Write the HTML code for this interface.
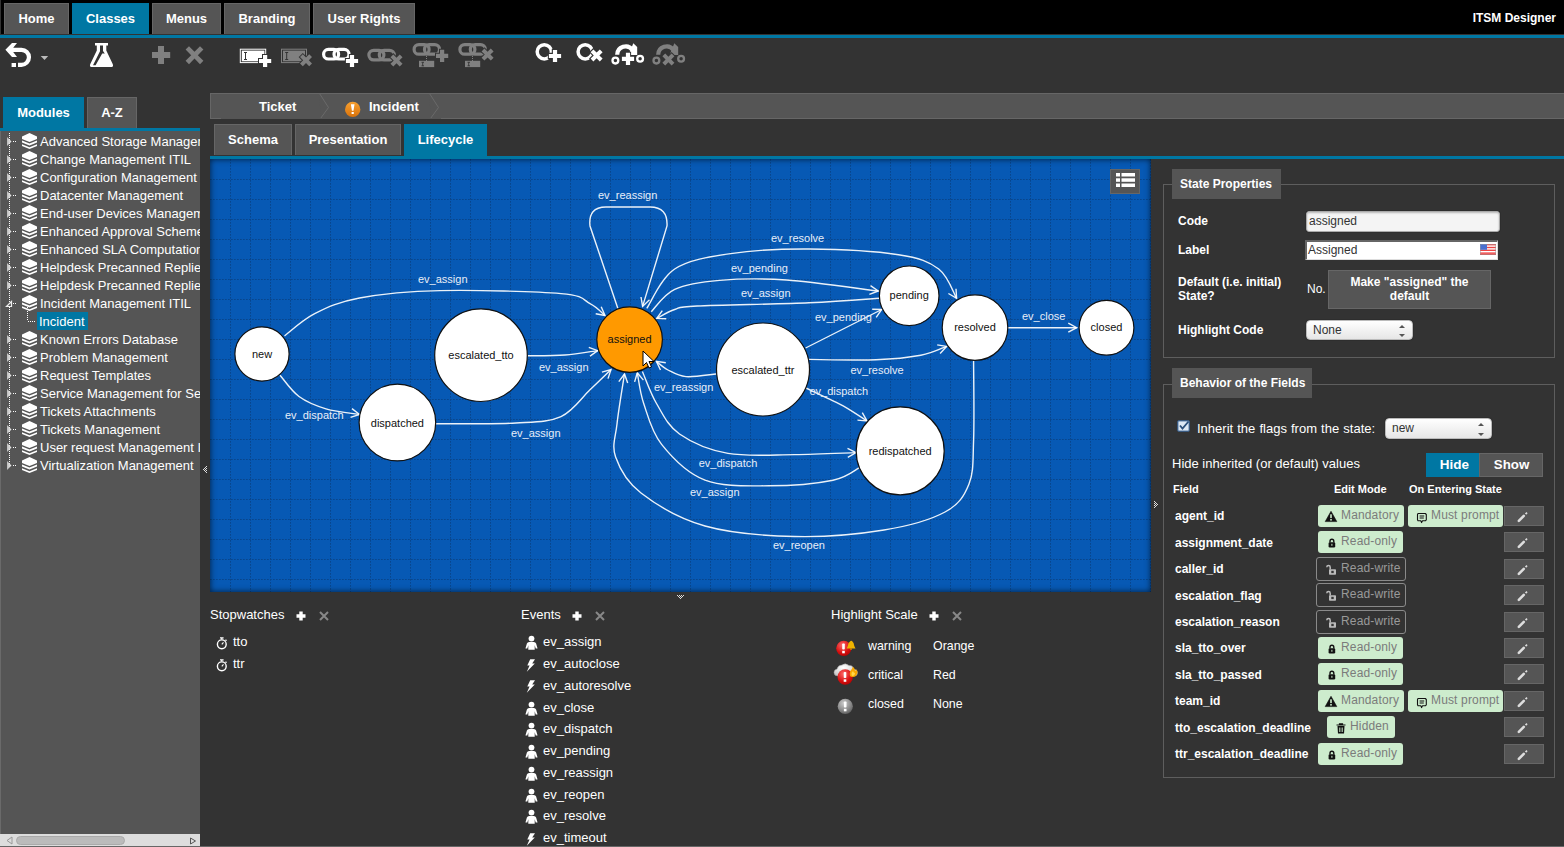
<!DOCTYPE html>
<html><head><meta charset="utf-8">
<style>
*{box-sizing:border-box;margin:0;padding:0}
html,body{width:1564px;height:847px;overflow:hidden;background:#333;font-family:"Liberation Sans",sans-serif;color:#fff}
.a{position:absolute}
.tab{position:absolute;background:#555;border:1px solid #666;border-bottom:none;font-weight:bold;font-size:13px;text-align:center;color:#fff;white-space:nowrap}
.tab.on{background:#0077a3;border-color:#0077a3}
.blue{position:absolute;background:#0077a3}
.tr{position:absolute;left:40px;height:18px;line-height:18px;font-size:13px;white-space:nowrap;color:#fff}
svg{position:absolute;overflow:visible}
.lab{font-weight:bold;font-size:12px;line-height:15px;white-space:nowrap}
.sel{border-radius:4px;background:linear-gradient(#fff,#e6e6e6);border:1px solid #bbb;box-shadow:0 0 1px #000;font-size:12px;color:#333;padding-left:6px;line-height:19px}
.sel:after{content:"";position:absolute;right:7px;top:4px;width:0;height:0;border:3px solid transparent;border-bottom:3px solid #555;border-top:none}
.sel:before{content:"";position:absolute;right:7px;bottom:2px;width:0;height:0;border:3px solid transparent;border-top:3px solid #555;border-bottom:none}
.bdg{font-size:12px;white-space:nowrap}
.bt{position:absolute;top:0;line-height:20px;letter-spacing:.15px}

</style></head>
<body>
<div class="a" style="left:1px;top:0;width:1563px;height:34px;background:#000"></div>
<div class="tab" style="left:4px;top:3px;width:65px;height:31px;line-height:30px">Home</div>
<div class="tab on" style="left:72px;top:3px;width:77px;height:31px;line-height:30px">Classes</div>
<div class="tab" style="left:152px;top:3px;width:69px;height:31px;line-height:30px">Menus</div>
<div class="tab" style="left:224px;top:3px;width:86px;height:31px;line-height:30px">Branding</div>
<div class="tab" style="left:313px;top:3px;width:102px;height:31px;line-height:30px">User Rights</div>
<div class="a" style="right:8px;top:11px;font-weight:bold;font-size:12px;color:#fff">ITSM Designer</div>
<div class="blue" style="left:0;top:35px;width:1564px;height:3px"></div>

<svg style="left:0;top:0" width="700" height="93" viewBox="0 0 700 93">
<defs>
<g id="plus"><path d="M-2.1 -6.1h4.2v4h4v4.2h-4v4h-4.2v-4h-4v-4.2h4z"/></g>
<g id="xx"><path d="M-6 -3.2L-3.2 -6L0 -2.8L3.2 -6L6 -3.2L2.8 0L6 3.2L3.2 6L0 2.8L-3.2 6L-6 3.2L-2.8 0z"/></g>
<g id="chain" fill="none" stroke-width="3.2"><rect x="1.6" y="1.6" width="15" height="9.6" rx="4.8"/><rect x="12" y="1.6" width="15" height="9.6" rx="4.8"/></g>
</defs>
<!-- undo -->
<path fill="#fff" d="M5.4 49.8L12 43H17L13.2 47.8H21.5A9.55 9.55 0 0 1 21.5 66.9H18V62.7H21.5A5.35 5.35 0 0 0 21.5 52H13.2L17 56.9H12Z M11.6 62.9h4.4v4h-4.4z"/>
<path fill="#bbb" d="M40.7 56H48.2L44.5 60Z"/>
<!-- flask -->
<path fill="#fff" fill-rule="evenodd" d="M95 43H108V45.6H106.3V50.5L112.8 64.2Q113.8 67 111 67H92Q89.2 67 90.2 64.2L96.8 50.5V45.6H95Z M100 45.6H103V51L104.8 53.6H102.2L95.6 65.3H93L100 51.2Z"/>
<!-- plus / x gray -->
<path fill="#808080" d="M158 46h6v6h6.2v6h-6.2v6h-6v-6h-6v-6h6z"/>
<path fill="#808080" d="M185.6 49.5L189 46.2L194.5 51.8L200 46.2L203.4 49.5L197.8 55.2L203.4 60.8L200 64.2L194.5 58.6L189 64.2L185.6 60.8L191.2 55.2Z"/>
<!-- field add -->
<rect x="240.3" y="49.2" width="25.4" height="13.4" fill="none" stroke="#fff"/>
<rect x="241.8" y="50.6" width="22.6" height="10.7" fill="#fff"/>
<path d="M244 52.5h3M245.5 52.5v7M244 59.5h3" stroke="#333" stroke-width="1"/>
<g fill="#fff" stroke="#333" stroke-width="2" paint-order="stroke" transform="translate(265.1 61)"><use href="#plus"/></g>
<!-- field del -->
<rect x="281.5" y="49.2" width="25" height="13.4" fill="none" stroke="#808080"/>
<rect x="283" y="50.6" width="22" height="10.7" fill="#808080"/>
<path d="M285.2 52.5h3M286.7 52.5v7M285.2 59.5h3" stroke="#333" stroke-width="1"/>
<g fill="#808080" stroke="#333" stroke-width="2" paint-order="stroke" transform="translate(306 60.3)"><use href="#xx"/></g>
<!-- link add -->
<g stroke="#fff" transform="translate(322 47.8)"><use href="#chain"/></g>
<g fill="#fff" stroke="#333" stroke-width="2" paint-order="stroke" transform="translate(352 61)"><use href="#plus"/></g>
<!-- link del -->
<g stroke="#808080" transform="translate(367.3 48.7)"><use href="#chain"/></g>
<g fill="#808080" stroke="#333" stroke-width="2" paint-order="stroke" transform="translate(396.5 60.5)"><use href="#xx"/></g>
<!-- link field add -->
<g stroke="#808080" transform="translate(412.5 43)"><use href="#chain"/></g>
<path d="M426.5 56v5" stroke="#808080" stroke-dasharray="1 1"/>
<rect x="419" y="60.8" width="15.2" height="6.3" fill="#808080"/>
<path d="M421.5 62.3h2.5M422.7 62.3v3.5M421.5 65.8h2.5" stroke="#333" stroke-width=".9"/>
<g fill="#808080" stroke="#333" stroke-width="2" paint-order="stroke" transform="translate(442.1 55.8)"><use href="#plus"/></g>
<!-- link field del -->
<g stroke="#808080" transform="translate(458.3 43)"><use href="#chain"/></g>
<path d="M472.5 56v5" stroke="#808080" stroke-dasharray="1 1"/>
<rect x="465" y="60.8" width="15.2" height="6.3" fill="#808080"/>
<path d="M467.5 62.3h2.5M468.7 62.3v3.5M467.5 65.8h2.5" stroke="#333" stroke-width=".9"/>
<g fill="#808080" stroke="#333" stroke-width="2" paint-order="stroke" transform="translate(487.6 54.6)"><use href="#xx"/></g>
<!-- state add -->
<circle cx="544.3" cy="51.8" r="7.1" fill="none" stroke="#fff" stroke-width="3.5"/>
<g fill="#fff" stroke="#333" stroke-width="2.2" paint-order="stroke" transform="translate(555 56)"><use href="#plus"/></g>
<!-- state del -->
<circle cx="585.2" cy="51.8" r="7.1" fill="none" stroke="#fff" stroke-width="3.5"/>
<g fill="#fff" stroke="#333" stroke-width="2.2" paint-order="stroke" transform="translate(596.6 55.4)"><use href="#xx"/></g>
<!-- transition add -->
<g>
<path d="M617.2 54.8A8.4 8.4 0 0 1 632.5 50" fill="none" stroke="#fff" stroke-width="4.2"/>
<path fill="#fff" d="M633.3 43.3L637.2 46.9V54.9H628.6Z"/>
<circle cx="615.4" cy="60.6" r="2.9" fill="none" stroke="#fff" stroke-width="2.3"/>
<circle cx="640.1" cy="58.7" r="2.9" fill="none" stroke="#fff" stroke-width="2.3"/>
</g>
<g fill="#fff" stroke="#333" stroke-width="2" paint-order="stroke" transform="translate(628 58.9)"><use href="#plus"/></g>
<!-- transition del -->
<g transform="translate(41 0)">
<path d="M617.2 54.8A8.4 8.4 0 0 1 632.5 50" fill="none" stroke="#808080" stroke-width="4.2"/>
<path fill="#808080" d="M633.3 43.3L637.2 46.9V54.9H628.6Z"/>
<circle cx="615.4" cy="60.6" r="2.9" fill="none" stroke="#808080" stroke-width="2.3"/>
<circle cx="640.1" cy="58.7" r="2.9" fill="none" stroke="#808080" stroke-width="2.3"/>
</g>
<g fill="#808080" stroke="#333" stroke-width="2" paint-order="stroke" transform="translate(668.4 59.5)"><use href="#xx"/></g>
</svg>

<div class="tab on" style="left:3px;top:97px;width:81px;height:31px;line-height:30px">Modules</div>
<div class="tab" style="left:87px;top:97px;width:50px;height:31px;line-height:30px">A-Z</div>
<div class="blue" style="left:0;top:128px;width:200px;height:3px"></div>
<div class="a" style="left:0;top:131px;width:200px;height:716px;background:#555;overflow:hidden"><div class="a" style="left:0;top:0;width:1px;height:716px;background:#6a6a6a"></div>
<svg style="left:0;top:0" width="200" height="716"><defs><linearGradient id="tg" x1="0" x2="1"><stop offset="0" stop-color="#bbb"/><stop offset="1" stop-color="#eee"/></linearGradient><g id="stk"><path d="M7.5 0L15 3.4V5.9L7.5 8.9L0 5.9V3.4Z M0 7.5L7.5 10.5L15 7.5V9.6L7.5 12.6L0 9.6Z M0 11.2L7.5 14.2L15 11.2V13L7.5 16L0 13Z" fill="#fff"/></g></defs><line x1="9.5" y1="2" x2="9.5" y2="334" stroke="#fff" stroke-width="1" stroke-dasharray="1 1"/><path d="M7 6L11.5 10.5L7 15Z" fill="url(#tg)"/><line x1="13" y1="10.5" x2="17" y2="10.5" stroke="#fff" stroke-dasharray="1 1"/><use href="#stk" x="22" y="2"/><path d="M7 24L11.5 28.5L7 33Z" fill="url(#tg)"/><line x1="13" y1="28.5" x2="17" y2="28.5" stroke="#fff" stroke-dasharray="1 1"/><use href="#stk" x="22" y="20"/><path d="M7 42L11.5 46.5L7 51Z" fill="url(#tg)"/><line x1="13" y1="46.5" x2="17" y2="46.5" stroke="#fff" stroke-dasharray="1 1"/><use href="#stk" x="22" y="38"/><path d="M7 60L11.5 64.5L7 69Z" fill="url(#tg)"/><line x1="13" y1="64.5" x2="17" y2="64.5" stroke="#fff" stroke-dasharray="1 1"/><use href="#stk" x="22" y="56"/><path d="M7 78L11.5 82.5L7 87Z" fill="url(#tg)"/><line x1="13" y1="82.5" x2="17" y2="82.5" stroke="#fff" stroke-dasharray="1 1"/><use href="#stk" x="22" y="74"/><path d="M7 96L11.5 100.5L7 105Z" fill="url(#tg)"/><line x1="13" y1="100.5" x2="17" y2="100.5" stroke="#fff" stroke-dasharray="1 1"/><use href="#stk" x="22" y="92"/><path d="M7 114L11.5 118.5L7 123Z" fill="url(#tg)"/><line x1="13" y1="118.5" x2="17" y2="118.5" stroke="#fff" stroke-dasharray="1 1"/><use href="#stk" x="22" y="110"/><path d="M7 132L11.5 136.5L7 141Z" fill="url(#tg)"/><line x1="13" y1="136.5" x2="17" y2="136.5" stroke="#fff" stroke-dasharray="1 1"/><use href="#stk" x="22" y="128"/><path d="M7 150L11.5 154.5L7 159Z" fill="url(#tg)"/><line x1="13" y1="154.5" x2="17" y2="154.5" stroke="#fff" stroke-dasharray="1 1"/><use href="#stk" x="22" y="146"/><path d="M6.5 175.5L11.5 175.5L11.5 170.5Z" fill="#555" stroke="#eee" stroke-width="1.2"/><line x1="13" y1="172.5" x2="17" y2="172.5" stroke="#fff" stroke-dasharray="1 1"/><use href="#stk" x="22" y="164"/><line x1="27.5" y1="176" x2="27.5" y2="190" stroke="#fff" stroke-dasharray="1 1"/><line x1="28" y1="190.5" x2="35" y2="190.5" stroke="#fff" stroke-dasharray="1 1"/><path d="M7 204L11.5 208.5L7 213Z" fill="url(#tg)"/><line x1="13" y1="208.5" x2="17" y2="208.5" stroke="#fff" stroke-dasharray="1 1"/><use href="#stk" x="22" y="200"/><path d="M7 222L11.5 226.5L7 231Z" fill="url(#tg)"/><line x1="13" y1="226.5" x2="17" y2="226.5" stroke="#fff" stroke-dasharray="1 1"/><use href="#stk" x="22" y="218"/><path d="M7 240L11.5 244.5L7 249Z" fill="url(#tg)"/><line x1="13" y1="244.5" x2="17" y2="244.5" stroke="#fff" stroke-dasharray="1 1"/><use href="#stk" x="22" y="236"/><path d="M7 258L11.5 262.5L7 267Z" fill="url(#tg)"/><line x1="13" y1="262.5" x2="17" y2="262.5" stroke="#fff" stroke-dasharray="1 1"/><use href="#stk" x="22" y="254"/><path d="M7 276L11.5 280.5L7 285Z" fill="url(#tg)"/><line x1="13" y1="280.5" x2="17" y2="280.5" stroke="#fff" stroke-dasharray="1 1"/><use href="#stk" x="22" y="272"/><path d="M7 294L11.5 298.5L7 303Z" fill="url(#tg)"/><line x1="13" y1="298.5" x2="17" y2="298.5" stroke="#fff" stroke-dasharray="1 1"/><use href="#stk" x="22" y="290"/><path d="M7 312L11.5 316.5L7 321Z" fill="url(#tg)"/><line x1="13" y1="316.5" x2="17" y2="316.5" stroke="#fff" stroke-dasharray="1 1"/><use href="#stk" x="22" y="308"/><path d="M7 330L11.5 334.5L7 339Z" fill="url(#tg)"/><line x1="13" y1="334.5" x2="17" y2="334.5" stroke="#fff" stroke-dasharray="1 1"/><use href="#stk" x="22" y="326"/></svg>
<div class="tr" style="top:2px">Advanced Storage Management</div>
<div class="tr" style="top:20px">Change Management ITIL</div>
<div class="tr" style="top:38px">Configuration Management</div>
<div class="tr" style="top:56px">Datacenter Management</div>
<div class="tr" style="top:74px">End-user Devices Management</div>
<div class="tr" style="top:92px">Enhanced Approval Schemes</div>
<div class="tr" style="top:110px">Enhanced SLA Computation</div>
<div class="tr" style="top:128px">Helpdesk Precanned Replies</div>
<div class="tr" style="top:146px">Helpdesk Precanned Replies</div>
<div class="tr" style="top:164px">Incident Management ITIL</div>
<div class="tr" style="left:37px;top:181px;height:18px;padding:0 3px 0 2px;background:#0077a3;line-height:20px">Incident</div>
<div class="tr" style="top:200px">Known Errors Database</div>
<div class="tr" style="top:218px">Problem Management</div>
<div class="tr" style="top:236px">Request Templates</div>
<div class="tr" style="top:254px">Service Management for Service Providers</div>
<div class="tr" style="top:272px">Tickets Attachments</div>
<div class="tr" style="top:290px">Tickets Management</div>
<div class="tr" style="top:308px">User request Management ITIL</div>
<div class="tr" style="top:326px">Virtualization Management</div>
<div class="a" style="left:0;top:703px;width:200px;height:12px;background:#ddd"></div>
<div class="a" style="left:16px;top:705px;width:109px;height:9px;background:#bbb;border-radius:5px;border:1px solid #aaa"></div>
<svg style="left:0;top:703px" width="200" height="12"><path d="M12 3L7 6.5L12 10Z" fill="none" stroke="#999"/><path d="M190.5 4L195.5 7L190.5 10Z" fill="none" stroke="#555"/></svg>
</div>
<!-- breadcrumb -->
<div class="a" style="left:210px;top:93px;width:1354px;height:26px;background:#555;border-top:1px solid #666;border-bottom:1px solid #666"></div>
<svg style="left:210px;top:93px" width="1354" height="26" viewBox="210 93 1354 26">
<path d="M210.5 119V93.5" stroke="#666"/>
<path d="M319.5 93.5L328.5 107.5L320.5 118.5" fill="#555" stroke="#6a6a6a" stroke-width="1"/>
<path d="M429.5 93.5L438.5 107.5L430.5 118.5" fill="#555" stroke="#6a6a6a" stroke-width="1"/>
<path d="M221 118.5H441" stroke="#555" stroke-width="1"/>
<defs><linearGradient id="og" x1="0" y1="0" x2="0" y2="1"><stop offset="0" stop-color="#f7a030"/><stop offset="1" stop-color="#d9720a"/></linearGradient></defs><circle cx="352.7" cy="109.4" r="7.7" fill="url(#og)"/><path d="M350.9 104.3h3.6l-1 6.4h-1.6z M351.6 112h2.2v2.1h-2.2z" fill="#fff"/>
</svg>
<div class="a" style="left:259px;top:99px;font-weight:bold;font-size:13px;line-height:15px">Ticket</div>
<div class="a" style="left:369px;top:99px;font-weight:bold;font-size:13px;line-height:15px">Incident</div>
<!-- sub tabs -->
<div class="tab" style="left:214px;top:124px;width:78px;height:31px;line-height:30px">Schema</div>
<div class="tab" style="left:295px;top:124px;width:106px;height:31px;line-height:30px">Presentation</div>
<div class="tab on" style="left:404px;top:124px;width:83px;height:32px;line-height:30px">Lifecycle</div>
<div class="blue" style="left:210px;top:156px;width:1354px;height:3px"></div>
<!-- splitter arrows -->
<svg style="left:0;top:0" width="1564" height="847" viewBox="0 0 1564 847"><g fill="#ddd"><rect x="206" y="466" width="1" height="1"/><rect x="206" y="468" width="1" height="1"/><rect x="206" y="470" width="1" height="1"/><rect x="206" y="472" width="1" height="1"/><rect x="205" y="467" width="1" height="1"/><rect x="205" y="469" width="1" height="1"/><rect x="205" y="471" width="1" height="1"/><rect x="204" y="468" width="1" height="1"/><rect x="204" y="470" width="1" height="1"/><rect x="203" y="469" width="1" height="1"/><rect x="1154" y="501" width="1" height="1"/><rect x="1154" y="503" width="1" height="1"/><rect x="1154" y="505" width="1" height="1"/><rect x="1154" y="507" width="1" height="1"/><rect x="1155" y="502" width="1" height="1"/><rect x="1155" y="504" width="1" height="1"/><rect x="1155" y="506" width="1" height="1"/><rect x="1156" y="503" width="1" height="1"/><rect x="1156" y="505" width="1" height="1"/><rect x="1157" y="504" width="1" height="1"/><rect x="677" y="595" width="1" height="1"/><rect x="679" y="595" width="1" height="1"/><rect x="681" y="595" width="1" height="1"/><rect x="683" y="595" width="1" height="1"/><rect x="678" y="596" width="1" height="1"/><rect x="680" y="596" width="1" height="1"/><rect x="682" y="596" width="1" height="1"/><rect x="679" y="597" width="1" height="1"/><rect x="681" y="597" width="1" height="1"/><rect x="680" y="598" width="1" height="1"/></g></svg>

<div class="a" style="left:210px;top:159px;width:941px;height:433px;background:#0759b4;overflow:hidden">
<svg style="left:0;top:0" width="941" height="433" viewBox="210 159 941 433" font-family="Liberation Sans" font-size="11">
<g stroke="#0a3468" stroke-width="1" stroke-dasharray="1.7 1.3" opacity="0.5">
<line x1="230.5" y1="159" x2="230.5" y2="592"/>
<line x1="250.5" y1="159" x2="250.5" y2="592"/>
<line x1="270.5" y1="159" x2="270.5" y2="592"/>
<line x1="290.5" y1="159" x2="290.5" y2="592"/>
<line x1="310.5" y1="159" x2="310.5" y2="592"/>
<line x1="330.5" y1="159" x2="330.5" y2="592"/>
<line x1="350.5" y1="159" x2="350.5" y2="592"/>
<line x1="370.5" y1="159" x2="370.5" y2="592"/>
<line x1="390.5" y1="159" x2="390.5" y2="592"/>
<line x1="410.5" y1="159" x2="410.5" y2="592"/>
<line x1="430.5" y1="159" x2="430.5" y2="592"/>
<line x1="450.5" y1="159" x2="450.5" y2="592"/>
<line x1="470.5" y1="159" x2="470.5" y2="592"/>
<line x1="490.5" y1="159" x2="490.5" y2="592"/>
<line x1="510.5" y1="159" x2="510.5" y2="592"/>
<line x1="530.5" y1="159" x2="530.5" y2="592"/>
<line x1="550.5" y1="159" x2="550.5" y2="592"/>
<line x1="570.5" y1="159" x2="570.5" y2="592"/>
<line x1="590.5" y1="159" x2="590.5" y2="592"/>
<line x1="610.5" y1="159" x2="610.5" y2="592"/>
<line x1="630.5" y1="159" x2="630.5" y2="592"/>
<line x1="650.5" y1="159" x2="650.5" y2="592"/>
<line x1="670.5" y1="159" x2="670.5" y2="592"/>
<line x1="690.5" y1="159" x2="690.5" y2="592"/>
<line x1="710.5" y1="159" x2="710.5" y2="592"/>
<line x1="730.5" y1="159" x2="730.5" y2="592"/>
<line x1="750.5" y1="159" x2="750.5" y2="592"/>
<line x1="770.5" y1="159" x2="770.5" y2="592"/>
<line x1="790.5" y1="159" x2="790.5" y2="592"/>
<line x1="810.5" y1="159" x2="810.5" y2="592"/>
<line x1="830.5" y1="159" x2="830.5" y2="592"/>
<line x1="850.5" y1="159" x2="850.5" y2="592"/>
<line x1="870.5" y1="159" x2="870.5" y2="592"/>
<line x1="890.5" y1="159" x2="890.5" y2="592"/>
<line x1="910.5" y1="159" x2="910.5" y2="592"/>
<line x1="930.5" y1="159" x2="930.5" y2="592"/>
<line x1="950.5" y1="159" x2="950.5" y2="592"/>
<line x1="970.5" y1="159" x2="970.5" y2="592"/>
<line x1="990.5" y1="159" x2="990.5" y2="592"/>
<line x1="1010.5" y1="159" x2="1010.5" y2="592"/>
<line x1="1030.5" y1="159" x2="1030.5" y2="592"/>
<line x1="1050.5" y1="159" x2="1050.5" y2="592"/>
<line x1="1070.5" y1="159" x2="1070.5" y2="592"/>
<line x1="1090.5" y1="159" x2="1090.5" y2="592"/>
<line x1="1110.5" y1="159" x2="1110.5" y2="592"/>
<line x1="1130.5" y1="159" x2="1130.5" y2="592"/>
<line x1="1150.5" y1="159" x2="1150.5" y2="592"/>
<line x1="210" y1="179.5" x2="1151" y2="179.5"/>
<line x1="210" y1="199.5" x2="1151" y2="199.5"/>
<line x1="210" y1="219.5" x2="1151" y2="219.5"/>
<line x1="210" y1="239.5" x2="1151" y2="239.5"/>
<line x1="210" y1="259.5" x2="1151" y2="259.5"/>
<line x1="210" y1="279.5" x2="1151" y2="279.5"/>
<line x1="210" y1="299.5" x2="1151" y2="299.5"/>
<line x1="210" y1="319.5" x2="1151" y2="319.5"/>
<line x1="210" y1="339.5" x2="1151" y2="339.5"/>
<line x1="210" y1="359.5" x2="1151" y2="359.5"/>
<line x1="210" y1="379.5" x2="1151" y2="379.5"/>
<line x1="210" y1="399.5" x2="1151" y2="399.5"/>
<line x1="210" y1="419.5" x2="1151" y2="419.5"/>
<line x1="210" y1="439.5" x2="1151" y2="439.5"/>
<line x1="210" y1="459.5" x2="1151" y2="459.5"/>
<line x1="210" y1="479.5" x2="1151" y2="479.5"/>
<line x1="210" y1="499.5" x2="1151" y2="499.5"/>
<line x1="210" y1="519.5" x2="1151" y2="519.5"/>
<line x1="210" y1="539.5" x2="1151" y2="539.5"/>
<line x1="210" y1="559.5" x2="1151" y2="559.5"/>
<line x1="210" y1="579.5" x2="1151" y2="579.5"/>
</g>
<g fill="none" stroke="#fff" stroke-width="1.4" stroke-opacity="0.92">
<path d="M284.5 336C289.5 332.3 302.2 320.0 314.7 313.7C327.2 307.4 338.6 301.9 359.5 298C380.4 294.1 406.4 291.3 440 290.6C473.6 289.9 536.0 291.4 561 293.6C586.0 295.8 582.7 300.0 590 303.6C597.3 307.2 602.5 313.5 605 315.5"/>
<path d="M595.7 313.8L605.0 315.5L601.2 306.8"/>
<path d="M280 375.2C283.2 378.8 291.3 390.9 299 396.5C306.7 402.1 315.9 405.8 326 408.8C336.1 411.8 353.9 413.5 359.5 414.4"/>
<path d="M350.5 417.4L359.5 414.4L352.0 408.6"/>
<path d="M435.5 423.8C448.9 423.7 495.1 424.2 516 423C536.9 421.8 548.7 422.1 561 416.6C573.3 411.1 581.7 397.6 590 389.8C598.3 382.0 607.5 373.0 611 369.6"/>
<path d="M608.0 378.6L611.0 369.6L601.9 372.2"/>
<path d="M527.7 355.7C533.9 355.6 553.3 355.9 565 355C576.7 354.1 592.2 351.3 597.7 350.6"/>
<path d="M590.0 356.1L597.7 350.6L588.8 347.3"/>
<path d="M617.8 308.2 L590 226 Q588 207 606 207 L650 207 Q668 207 667 226 L642.6 306.4"/>
<path d="M641.0 297.0L642.6 306.4L649.5 299.8"/>
<path d="M646.8 308.4C651.4 301.8 660.7 278.1 674.7 269C688.7 259.9 708.3 256.9 730.7 253.6C753.1 250.3 781.0 248.8 809 249C837.0 249.2 876.9 251.4 898.5 254.7C920.1 258.0 929.0 261.7 938.7 269C948.4 276.3 953.6 293.4 956.6 298.3"/>
<path d="M948.4 293.5L956.6 298.3L956.0 288.8"/>
<path d="M651.3 311.7C655.2 308.0 663.3 294.6 674.7 289.4C686.1 284.2 700.9 282.0 719.5 280.4C738.1 278.8 760.1 278.2 786.6 280C813.1 281.8 863.0 289.2 878.3 291"/>
<path d="M869.4 294.4L878.3 291.0L870.5 285.6"/>
<path d="M879.4 298.3C867.7 299.1 839.4 301.5 809 302.8C778.6 304.1 719.4 304.9 697 306C674.6 307.1 681.4 307.4 674.7 309.5C668.0 311.6 659.8 316.9 656.8 318.4"/>
<path d="M662.3 310.7L656.8 318.4L666.3 318.7"/>
<path d="M805.6 348C818.3 341.6 869.0 315.9 881.7 309.5"/>
<path d="M876.2 317.3L881.7 309.5L872.2 309.3"/>
<path d="M808.5 359.4C819.8 359.5 857.3 360.5 876 359.8C894.7 359.1 909.0 357.5 920.8 355.3C932.6 353.1 942.3 347.9 946.6 346.4"/>
<path d="M940.1 353.4L946.6 346.4L937.2 344.9"/>
<path d="M716 374C711.0 374.4 694.0 377.3 686 376.6C678.0 375.9 672.9 372.5 668 370C663.1 367.5 658.3 362.8 656.4 361.4"/>
<path d="M665.8 362.8L656.4 361.4L660.5 370.0"/>
<path d="M806 388C809.6 389.7 821.2 395.2 827.8 398.4C834.4 401.6 839.2 403.6 845.7 407.3C852.2 411.1 863.5 418.6 867 420.9"/>
<path d="M857.5 420.1L867.0 420.9L862.3 412.6"/>
<path d="M642.4 371.5C644.8 376.8 650.3 393.1 656.5 403.5C662.7 413.9 667.6 425.7 679.5 434C691.4 442.3 708.8 450.0 728 453.4C747.2 456.8 773.3 454.7 794.6 454.6C815.9 454.5 845.8 452.9 856 452.6"/>
<path d="M847.8 457.3L856.0 452.6L847.5 448.4"/>
<path d="M859.8 467.4C855.3 469.5 848.1 477.1 833 480.2C817.9 483.3 790.3 485.8 769 485.8C747.7 485.8 722.9 487.1 705 480.2C687.1 473.3 671.8 457.2 661.6 444.4C651.4 431.6 647.8 415.4 643.7 403.5C639.7 391.6 638.4 377.9 637.3 372.8"/>
<path d="M643.4 380.1L637.3 372.8L634.6 381.9"/>
<path d="M973.6 361C973.6 374.2 974.4 419.5 973.6 440C972.8 460.5 973.8 472.0 969 484C964.2 496.0 959.2 504.3 945 512C930.8 519.7 909.1 525.9 884 530C858.9 534.1 824.4 537.2 794.6 536.5C764.8 535.8 730.6 533.2 705 526C679.4 518.8 655.9 504.5 641 493C626.1 481.5 619.6 468.5 615.6 457C611.6 445.5 615.5 437.8 617 424C618.5 410.2 623.2 382.3 624.5 374"/>
<path d="M627.7 383.0L624.5 374.0L618.8 381.6"/>
<path d="M1008 327.7C1019.5 327.7 1065.2 327.7 1076.7 327.7"/>
<path d="M1068.3 332.2L1076.7 327.7L1068.3 323.2"/>
</g>
<g fill="#e8eef8">
<text x="418" y="283">ev_assign</text>
<text x="285" y="418.8">ev_dispatch</text>
<text x="511" y="436.7">ev_assign</text>
<text x="539" y="370.7">ev_assign</text>
<text x="598" y="199">ev_reassign</text>
<text x="771" y="241.7">ev_resolve</text>
<text x="731" y="272">ev_pending</text>
<text x="741" y="296.7">ev_assign</text>
<text x="815" y="321">ev_pending</text>
<text x="850.4" y="374">ev_resolve</text>
<text x="654" y="390.7">ev_reassign</text>
<text x="809.4" y="394.5">ev_dispatch</text>
<text x="698.7" y="467.4">ev_dispatch</text>
<text x="690" y="495.5">ev_assign</text>
<text x="772.9" y="549">ev_reopen</text>
<text x="1022" y="319.8">ev_close</text>
</g>
<circle cx="262" cy="354" r="27.1" fill="#fff" stroke="#111" stroke-width="1.2"/>
<text x="262" y="358" text-anchor="middle" fill="#111">new</text>
<circle cx="481" cy="355.2" r="46.3" fill="#fff" stroke="#111" stroke-width="1.2"/>
<text x="481" y="359.2" text-anchor="middle" fill="#111">escalated_tto</text>
<circle cx="397.4" cy="422.5" r="38.3" fill="#fff" stroke="#111" stroke-width="1.2"/>
<text x="397.4" y="426.5" text-anchor="middle" fill="#111">dispatched</text>
<circle cx="629.6" cy="339.6" r="32.8" fill="#f90" stroke="#111" stroke-width="1.2"/>
<text x="629.6" y="342.6" text-anchor="middle" fill="#111">assigned</text>
<circle cx="763" cy="369.5" r="46.5" fill="#fff" stroke="#111" stroke-width="1.2"/>
<text x="763" y="373.5" text-anchor="middle" fill="#111">escalated_ttr</text>
<circle cx="909.2" cy="295.8" r="29.8" fill="#fff" stroke="#111" stroke-width="1.2"/>
<text x="909.2" y="298.8" text-anchor="middle" fill="#111">pending</text>
<circle cx="975" cy="327.6" r="32.8" fill="#fff" stroke="#111" stroke-width="1.2"/>
<text x="975" y="330.6" text-anchor="middle" fill="#111">resolved</text>
<circle cx="1106.5" cy="327.8" r="27.400000000000002" fill="#fff" stroke="#111" stroke-width="1.2"/>
<text x="1106.5" y="330.8" text-anchor="middle" fill="#111">closed</text>
<circle cx="900.2" cy="450.9" r="44.0" fill="#fff" stroke="#111" stroke-width="1.2"/>
<text x="900.2" y="454.9" text-anchor="middle" fill="#111">redispatched</text>
<path d="M643 351 L643 366 L646.5 362.5 L649 368 L651.5 367 L649 361.5 L654 361.5 Z" fill="#fff" stroke="#000" stroke-width="1"/>
<rect x="1110.5" y="169.5" width="29" height="24" fill="#555" stroke="#666"/>
<g fill="#fff"><rect x="1116" y="173" width="4" height="3.5"/><rect x="1121.5" y="173" width="13.5" height="3.5"/><rect x="1116" y="178.3" width="4" height="3.5"/><rect x="1121.5" y="178.3" width="13.5" height="3.5"/><rect x="1116" y="183.5" width="4" height="3.5"/><rect x="1121.5" y="183.5" width="13.5" height="3.5"/></g>
</svg>
<div class="a" style="left:0;top:0;width:941px;height:433px;box-shadow:inset 0 0 6px rgba(0,0,0,.7)"></div>
</div>
<div class="a" style="left:1163px;top:184px;width:392px;height:174px;border:1px solid #5e5e5e"></div>
<div class="a" style="left:1172px;top:169px;width:109px;height:30px;background:#555;font-weight:bold;font-size:12px;line-height:30px;padding-left:8px">State Properties</div>
<div class="a lab" style="left:1178px;top:214px">Code</div>
<div class="a" style="left:1306px;top:211px;width:194px;height:21px;background:#f4f4f4;border:1px solid #aaa;border-radius:3px;box-shadow:inset 0 1px 2px rgba(0,0,0,.25), 0 0 1px #000;font-size:12px;color:#333;line-height:19px;padding-left:2px">assigned</div>
<div class="a lab" style="left:1178px;top:243px">Label</div>
<div class="a" style="left:1305px;top:240px;width:193px;height:20px;background:#fff;border-top:2px solid #666;border-left:2px solid #666;border-right:1px solid #ddd;border-bottom:1px solid #ddd;font-size:12px;color:#333;line-height:17px;padding-left:1px">Assigned</div>
<svg style="left:1480px;top:244px" width="16" height="11" viewBox="0 0 16 11"><rect x="0" y="0" width="16" height="11" fill="#fff"/><g fill="#e44"><rect y="0" width="16" height="1.4"/><rect y="2.8" width="16" height="1.4"/><rect y="5.6" width="16" height="1.4"/><rect y="8.4" width="16" height="1.4"/><rect y="9.8" width="16" height="1.2"/></g><rect x="0" y="0" width="7" height="5.8" fill="#4a6fd0"/><rect x="0.5" y="0.5" width="15" height="10" fill="none" stroke="#999" stroke-width="1" opacity=".5"/></svg>
<div class="a lab" style="left:1178px;top:275px;line-height:14px">Default (i.e. initial)<br>State?</div>
<div class="a" style="left:1307px;top:282px;font-size:12px;line-height:14px">No.</div>
<div class="a" style="left:1328px;top:270px;width:163px;height:39px;background:#555;border:1px solid #666;font-weight:bold;font-size:12px;line-height:14px;text-align:center;padding-top:4px">Make "assigned" the<br>default</div>
<div class="a lab" style="left:1178px;top:323px">Highlight Code</div>
<div class="a sel" style="left:1306px;top:320px;width:107px;height:20px">None</div>
<div class="a" style="left:1163px;top:384px;width:392px;height:394px;border:1px solid #5e5e5e"></div>
<div class="a" style="left:1172px;top:368px;width:140px;height:30px;background:#555;font-weight:bold;font-size:12px;line-height:30px;padding-left:8px">Behavior of the Fields</div>
<svg style="left:1177px;top:420px" width="14" height="13" viewBox="0 0 14 13"><rect x="0.5" y="0.5" width="12" height="11" rx="1.5" fill="#5b7fa8" stroke="#3a5a80"/><rect x="1.5" y="1.5" width="10" height="9" fill="#dde8f4"/><path d="M3 5.5L5.5 8.5L11.5 1.5" fill="none" stroke="#2b4f7a" stroke-width="1.8"/></svg>
<div class="a" style="left:1197px;top:421px;font-size:13px;line-height:16px;word-spacing:0.5px">Inherit the flags from the state:</div>
<div class="a sel" style="left:1385px;top:418px;width:107px;height:21px">new</div>
<div class="a" style="left:1172px;top:456px;font-size:13px;line-height:16px">Hide inherited (or default) values</div>
<div class="a" style="left:1426px;top:453px;width:53px;height:24px;background:#0077a3;font-weight:bold;font-size:13.5px;line-height:24px;text-align:center;padding-left:4px">Hide</div>
<div class="a" style="left:1479px;top:453px;width:64px;height:24px;background:#555;border:1px solid #666;font-weight:bold;font-size:13.3px;line-height:22px;text-align:center;padding-left:1px">Show</div>
<div class="a" style="left:1173px;top:482px;font-weight:bold;font-size:11px;line-height:14px">Field</div>
<div class="a" style="left:1334px;top:482px;font-weight:bold;font-size:11px;line-height:14px">Edit Mode</div>
<div class="a" style="left:1409px;top:482px;font-weight:bold;font-size:11px;line-height:14px">On Entering State</div>
<div class="a" style="left:1175px;top:509.3px;font-weight:bold;font-size:12px;line-height:15px">agent_id</div>
<div class="a bdg" style="left:1318px;top:505px;width:86px;height:22px;background:#cdeccd;border-radius:3px;color:#7b7b7b"><svg width="12" height="11" viewBox="0 0 12 11" style="position:absolute;left:7px;top:6px"><path d="M6 0.3L11.8 10.6H0.2Z" fill="#111" stroke="#111" stroke-linejoin="round" stroke-width=".6"/><rect x="5.2" y="3.3" width="1.6" height="3.8" fill="#cdeccd"/><rect x="5.2" y="8" width="1.6" height="1.6" fill="#cdeccd"/></svg><span class="bt" style="left:23px">Mandatory</span></div>
<div class="a bdg" style="left:1408px;top:505px;width:95px;height:22px;background:#cdeccd;border-radius:3px;color:#7b7b7b"><svg width="11" height="11" viewBox="0 0 11 11" style="position:absolute;left:8.5px;top:7.5px"><path d="M1 0.5H8.3L9.3 1.5V6.8L8.3 7.8H5.5L4.6 9.6L3.8 7.8H1L0.5 6.8V1.5Z" fill="none" stroke="#111" stroke-width="1.1" stroke-linejoin="round"/><path d="M2.6 3H7.2M2.6 5H6.8" stroke="#111" stroke-width="1"/></svg><span class="bt" style="left:23px">Must prompt</span></div>
<div class="a" style="left:1504px;top:506px;width:40px;height:20px;background:#555;border:1px solid #666"><svg width="12" height="12" viewBox="0 0 12 12" style="position:absolute;left:11.5px;top:4px"><path d="M1.8 9.8L6.8 4.8" stroke="#ddd" stroke-width="2.6" stroke-linecap="round"/><path d="M7.9 2.4L9.5 1L10.6 2.2L9.2 3.8Z" fill="#ddd"/></svg></div>
<div class="a" style="left:1175px;top:535.9px;font-weight:bold;font-size:12px;line-height:15px">assignment_date</div>
<div class="a bdg" style="left:1318px;top:531px;width:85px;height:22px;background:#cdeccd;border-radius:3px;color:#7b7b7b"><svg width="8" height="10" viewBox="0 0 8 10" style="position:absolute;left:10px;top:6.5px"><path d="M2 4.5V3.2A1.9 1.9 0 0 1 5.8 3.2V4.5" fill="none" stroke="#111" stroke-width="1.4"/><rect x="0.6" y="4.2" width="6.6" height="5.3" rx="1.2" fill="#111"/><rect x="3.4" y="5.8" width="1" height="2" fill="#cdeccd"/></svg><span class="bt" style="left:23px">Read-only</span></div>
<div class="a" style="left:1504px;top:532px;width:40px;height:20px;background:#555;border:1px solid #666"><svg width="12" height="12" viewBox="0 0 12 12" style="position:absolute;left:11.5px;top:4px"><path d="M1.8 9.8L6.8 4.8" stroke="#ddd" stroke-width="2.6" stroke-linecap="round"/><path d="M7.9 2.4L9.5 1L10.6 2.2L9.2 3.8Z" fill="#ddd"/></svg></div>
<div class="a" style="left:1175px;top:562.3px;font-weight:bold;font-size:12px;line-height:15px">caller_id</div>
<div class="a bdg" style="left:1316px;top:557px;width:90px;height:24px;border:1px solid #8a8a8a;border-radius:3px;color:#9a9a9a"><svg width="11" height="10" viewBox="0 0 11 10" style="position:absolute;left:9px;top:7px"><path d="M0.8 2.3A1.7 1.7 0 0 1 4.2 2.3V4.5" fill="none" stroke="#bbb" stroke-width="1.5"/><rect x="3" y="4.2" width="7" height="5.5" rx=".8" fill="#bbb"/><rect x="5.3" y="5.8" width="2.4" height="2.3" fill="#333"/></svg><span class="bt" style="left:24px">Read-write</span></div>
<div class="a" style="left:1504px;top:559px;width:40px;height:20px;background:#555;border:1px solid #666"><svg width="12" height="12" viewBox="0 0 12 12" style="position:absolute;left:11.5px;top:4px"><path d="M1.8 9.8L6.8 4.8" stroke="#ddd" stroke-width="2.6" stroke-linecap="round"/><path d="M7.9 2.4L9.5 1L10.6 2.2L9.2 3.8Z" fill="#ddd"/></svg></div>
<div class="a" style="left:1175px;top:588.8px;font-weight:bold;font-size:12px;line-height:15px">escalation_flag</div>
<div class="a bdg" style="left:1316px;top:583px;width:90px;height:24px;border:1px solid #8a8a8a;border-radius:3px;color:#9a9a9a"><svg width="11" height="10" viewBox="0 0 11 10" style="position:absolute;left:9px;top:7px"><path d="M0.8 2.3A1.7 1.7 0 0 1 4.2 2.3V4.5" fill="none" stroke="#bbb" stroke-width="1.5"/><rect x="3" y="4.2" width="7" height="5.5" rx=".8" fill="#bbb"/><rect x="5.3" y="5.8" width="2.4" height="2.3" fill="#333"/></svg><span class="bt" style="left:24px">Read-write</span></div>
<div class="a" style="left:1504px;top:585px;width:40px;height:20px;background:#555;border:1px solid #666"><svg width="12" height="12" viewBox="0 0 12 12" style="position:absolute;left:11.5px;top:4px"><path d="M1.8 9.8L6.8 4.8" stroke="#ddd" stroke-width="2.6" stroke-linecap="round"/><path d="M7.9 2.4L9.5 1L10.6 2.2L9.2 3.8Z" fill="#ddd"/></svg></div>
<div class="a" style="left:1175px;top:615.2px;font-weight:bold;font-size:12px;line-height:15px">escalation_reason</div>
<div class="a bdg" style="left:1316px;top:610px;width:90px;height:24px;border:1px solid #8a8a8a;border-radius:3px;color:#9a9a9a"><svg width="11" height="10" viewBox="0 0 11 10" style="position:absolute;left:9px;top:7px"><path d="M0.8 2.3A1.7 1.7 0 0 1 4.2 2.3V4.5" fill="none" stroke="#bbb" stroke-width="1.5"/><rect x="3" y="4.2" width="7" height="5.5" rx=".8" fill="#bbb"/><rect x="5.3" y="5.8" width="2.4" height="2.3" fill="#333"/></svg><span class="bt" style="left:24px">Read-write</span></div>
<div class="a" style="left:1504px;top:612px;width:40px;height:20px;background:#555;border:1px solid #666"><svg width="12" height="12" viewBox="0 0 12 12" style="position:absolute;left:11.5px;top:4px"><path d="M1.8 9.8L6.8 4.8" stroke="#ddd" stroke-width="2.6" stroke-linecap="round"/><path d="M7.9 2.4L9.5 1L10.6 2.2L9.2 3.8Z" fill="#ddd"/></svg></div>
<div class="a" style="left:1175px;top:641.3px;font-weight:bold;font-size:12px;line-height:15px">sla_tto_over</div>
<div class="a bdg" style="left:1318px;top:637px;width:85px;height:22px;background:#cdeccd;border-radius:3px;color:#7b7b7b"><svg width="8" height="10" viewBox="0 0 8 10" style="position:absolute;left:10px;top:6.5px"><path d="M2 4.5V3.2A1.9 1.9 0 0 1 5.8 3.2V4.5" fill="none" stroke="#111" stroke-width="1.4"/><rect x="0.6" y="4.2" width="6.6" height="5.3" rx="1.2" fill="#111"/><rect x="3.4" y="5.8" width="1" height="2" fill="#cdeccd"/></svg><span class="bt" style="left:23px">Read-only</span></div>
<div class="a" style="left:1504px;top:638px;width:40px;height:20px;background:#555;border:1px solid #666"><svg width="12" height="12" viewBox="0 0 12 12" style="position:absolute;left:11.5px;top:4px"><path d="M1.8 9.8L6.8 4.8" stroke="#ddd" stroke-width="2.6" stroke-linecap="round"/><path d="M7.9 2.4L9.5 1L10.6 2.2L9.2 3.8Z" fill="#ddd"/></svg></div>
<div class="a" style="left:1175px;top:667.9px;font-weight:bold;font-size:12px;line-height:15px">sla_tto_passed</div>
<div class="a bdg" style="left:1318px;top:663px;width:85px;height:22px;background:#cdeccd;border-radius:3px;color:#7b7b7b"><svg width="8" height="10" viewBox="0 0 8 10" style="position:absolute;left:10px;top:6.5px"><path d="M2 4.5V3.2A1.9 1.9 0 0 1 5.8 3.2V4.5" fill="none" stroke="#111" stroke-width="1.4"/><rect x="0.6" y="4.2" width="6.6" height="5.3" rx="1.2" fill="#111"/><rect x="3.4" y="5.8" width="1" height="2" fill="#cdeccd"/></svg><span class="bt" style="left:23px">Read-only</span></div>
<div class="a" style="left:1504px;top:664px;width:40px;height:20px;background:#555;border:1px solid #666"><svg width="12" height="12" viewBox="0 0 12 12" style="position:absolute;left:11.5px;top:4px"><path d="M1.8 9.8L6.8 4.8" stroke="#ddd" stroke-width="2.6" stroke-linecap="round"/><path d="M7.9 2.4L9.5 1L10.6 2.2L9.2 3.8Z" fill="#ddd"/></svg></div>
<div class="a" style="left:1175px;top:694.3px;font-weight:bold;font-size:12px;line-height:15px">team_id</div>
<div class="a bdg" style="left:1318px;top:690px;width:86px;height:22px;background:#cdeccd;border-radius:3px;color:#7b7b7b"><svg width="12" height="11" viewBox="0 0 12 11" style="position:absolute;left:7px;top:6px"><path d="M6 0.3L11.8 10.6H0.2Z" fill="#111" stroke="#111" stroke-linejoin="round" stroke-width=".6"/><rect x="5.2" y="3.3" width="1.6" height="3.8" fill="#cdeccd"/><rect x="5.2" y="8" width="1.6" height="1.6" fill="#cdeccd"/></svg><span class="bt" style="left:23px">Mandatory</span></div>
<div class="a bdg" style="left:1408px;top:690px;width:95px;height:22px;background:#cdeccd;border-radius:3px;color:#7b7b7b"><svg width="11" height="11" viewBox="0 0 11 11" style="position:absolute;left:8.5px;top:7.5px"><path d="M1 0.5H8.3L9.3 1.5V6.8L8.3 7.8H5.5L4.6 9.6L3.8 7.8H1L0.5 6.8V1.5Z" fill="none" stroke="#111" stroke-width="1.1" stroke-linejoin="round"/><path d="M2.6 3H7.2M2.6 5H6.8" stroke="#111" stroke-width="1"/></svg><span class="bt" style="left:23px">Must prompt</span></div>
<div class="a" style="left:1504px;top:691px;width:40px;height:20px;background:#555;border:1px solid #666"><svg width="12" height="12" viewBox="0 0 12 12" style="position:absolute;left:11.5px;top:4px"><path d="M1.8 9.8L6.8 4.8" stroke="#ddd" stroke-width="2.6" stroke-linecap="round"/><path d="M7.9 2.4L9.5 1L10.6 2.2L9.2 3.8Z" fill="#ddd"/></svg></div>
<div class="a" style="left:1175px;top:720.9px;font-weight:bold;font-size:12px;line-height:15px">tto_escalation_deadline</div>
<div class="a bdg" style="left:1327px;top:716px;width:68px;height:22px;background:#cdeccd;border-radius:3px;color:#7b7b7b"><svg width="10" height="11" viewBox="0 0 10 11" style="position:absolute;left:9px;top:7px"><path d="M0.5 2H9.5M3.5 2V0.8H6.5V2" fill="none" stroke="#111" stroke-width="1.2"/><path d="M1.5 3H8.5L8 10.5H2Z" fill="#111"/><path d="M3.5 4.5V9M5 4.5V9M6.5 4.5V9" stroke="#cdeccd" stroke-width=".7"/></svg><span class="bt" style="left:23px">Hidden</span></div>
<div class="a" style="left:1504px;top:717px;width:40px;height:20px;background:#555;border:1px solid #666"><svg width="12" height="12" viewBox="0 0 12 12" style="position:absolute;left:11.5px;top:4px"><path d="M1.8 9.8L6.8 4.8" stroke="#ddd" stroke-width="2.6" stroke-linecap="round"/><path d="M7.9 2.4L9.5 1L10.6 2.2L9.2 3.8Z" fill="#ddd"/></svg></div>
<div class="a" style="left:1175px;top:747.2px;font-weight:bold;font-size:12px;line-height:15px">ttr_escalation_deadline</div>
<div class="a bdg" style="left:1318px;top:743px;width:85px;height:22px;background:#cdeccd;border-radius:3px;color:#7b7b7b"><svg width="8" height="10" viewBox="0 0 8 10" style="position:absolute;left:10px;top:6.5px"><path d="M2 4.5V3.2A1.9 1.9 0 0 1 5.8 3.2V4.5" fill="none" stroke="#111" stroke-width="1.4"/><rect x="0.6" y="4.2" width="6.6" height="5.3" rx="1.2" fill="#111"/><rect x="3.4" y="5.8" width="1" height="2" fill="#cdeccd"/></svg><span class="bt" style="left:23px">Read-only</span></div>
<div class="a" style="left:1504px;top:744px;width:40px;height:20px;background:#555;border:1px solid #666"><svg width="12" height="12" viewBox="0 0 12 12" style="position:absolute;left:11.5px;top:4px"><path d="M1.8 9.8L6.8 4.8" stroke="#ddd" stroke-width="2.6" stroke-linecap="round"/><path d="M7.9 2.4L9.5 1L10.6 2.2L9.2 3.8Z" fill="#ddd"/></svg></div>
<div class="a" style="left:210px;top:607px;font-size:13px;line-height:16px">Stopwatches</div>
<svg width="10" height="10" viewBox="0 0 10 10" style="position:absolute;left:296px;top:610.5px"><path d="M3.3 0.5h3.4v2.8h2.8v3.4h-2.8v2.8h-3.4v-2.8h-2.8v-3.4h2.8z" fill="#fff"/></svg>
<svg width="10" height="10" viewBox="0 0 10 10" style="position:absolute;left:318.5px;top:610.5px"><path d="M1 1L9 9M9 1L1 9" stroke="#888" stroke-width="2"/></svg>
<div class="a" style="left:521px;top:607px;font-size:13px;line-height:16px">Events</div>
<svg width="10" height="10" viewBox="0 0 10 10" style="position:absolute;left:571.5px;top:610.5px"><path d="M3.3 0.5h3.4v2.8h2.8v3.4h-2.8v2.8h-3.4v-2.8h-2.8v-3.4h2.8z" fill="#fff"/></svg>
<svg width="10" height="10" viewBox="0 0 10 10" style="position:absolute;left:594.5px;top:610.5px"><path d="M1 1L9 9M9 1L1 9" stroke="#888" stroke-width="2"/></svg>
<div class="a" style="left:831px;top:607px;font-size:13px;line-height:16px">Highlight Scale</div>
<svg width="10" height="10" viewBox="0 0 10 10" style="position:absolute;left:928.5px;top:610.5px"><path d="M3.3 0.5h3.4v2.8h2.8v3.4h-2.8v2.8h-3.4v-2.8h-2.8v-3.4h2.8z" fill="#fff"/></svg>
<svg width="10" height="10" viewBox="0 0 10 10" style="position:absolute;left:951.5px;top:610.5px"><path d="M1 1L9 9M9 1L1 9" stroke="#888" stroke-width="2"/></svg>
<svg width="12" height="13" viewBox="0 0 12 13" style="position:absolute;left:215.5px;top:636.5px"><circle cx="5.8" cy="7.3" r="4.4" fill="none" stroke="#fff" stroke-width="1.4"/><path d="M4 0.8H7.6M5.8 0.8V2.5M9.5 2.8L10.5 3.8" stroke="#fff" stroke-width="1.3"/><path d="M5.8 7.3L7.5 5.3" stroke="#fff" stroke-width="1.1"/></svg>
<div class="a" style="left:233px;top:633.5px;font-size:13px;line-height:16px">tto</div>
<svg width="12" height="13" viewBox="0 0 12 13" style="position:absolute;left:215.5px;top:658.5px"><circle cx="5.8" cy="7.3" r="4.4" fill="none" stroke="#fff" stroke-width="1.4"/><path d="M4 0.8H7.6M5.8 0.8V2.5M9.5 2.8L10.5 3.8" stroke="#fff" stroke-width="1.3"/><path d="M5.8 7.3L7.5 5.3" stroke="#fff" stroke-width="1.1"/></svg>
<div class="a" style="left:233px;top:655.5px;font-size:13px;line-height:16px">ttr</div>
<svg width="13" height="14" viewBox="-0.5 0 13 14" style="position:absolute;left:524.5px;top:636.0px"><circle cx="6" cy="2.6" r="2.9" fill="#fff"/><path d="M3.6 5.9H8.4Q10 5.9 10.6 7.5L12 12.3Q12.1 12.6 11.6 12.6H10.2L9.2 9.3V13.7H2.8V9.3L1.8 12.6H0.4Q-0.1 12.6 0 12.3L1.4 7.5Q2 5.9 3.6 5.9Z" fill="#fff"/></svg>
<div class="a" style="left:543px;top:634px;font-size:13px;line-height:16px">ev_assign</div>
<svg width="10" height="13" viewBox="0 0 10 13" style="position:absolute;left:526px;top:658.5px"><path d="M4.2 0.2H9L6.2 4.6H8.8L0.8 12.8L3.6 6.6H1.3Z" fill="#fff"/></svg>
<div class="a" style="left:543px;top:656px;font-size:13px;line-height:16px">ev_autoclose</div>
<svg width="10" height="13" viewBox="0 0 10 13" style="position:absolute;left:526px;top:680.0px"><path d="M4.2 0.2H9L6.2 4.6H8.8L0.8 12.8L3.6 6.6H1.3Z" fill="#fff"/></svg>
<div class="a" style="left:543px;top:678px;font-size:13px;line-height:16px">ev_autoresolve</div>
<svg width="13" height="14" viewBox="-0.5 0 13 14" style="position:absolute;left:524.5px;top:701.5px"><circle cx="6" cy="2.6" r="2.9" fill="#fff"/><path d="M3.6 5.9H8.4Q10 5.9 10.6 7.5L12 12.3Q12.1 12.6 11.6 12.6H10.2L9.2 9.3V13.7H2.8V9.3L1.8 12.6H0.4Q-0.1 12.6 0 12.3L1.4 7.5Q2 5.9 3.6 5.9Z" fill="#fff"/></svg>
<div class="a" style="left:543px;top:700px;font-size:13px;line-height:16px">ev_close</div>
<svg width="13" height="14" viewBox="-0.5 0 13 14" style="position:absolute;left:524.5px;top:723.0px"><circle cx="6" cy="2.6" r="2.9" fill="#fff"/><path d="M3.6 5.9H8.4Q10 5.9 10.6 7.5L12 12.3Q12.1 12.6 11.6 12.6H10.2L9.2 9.3V13.7H2.8V9.3L1.8 12.6H0.4Q-0.1 12.6 0 12.3L1.4 7.5Q2 5.9 3.6 5.9Z" fill="#fff"/></svg>
<div class="a" style="left:543px;top:721px;font-size:13px;line-height:16px">ev_dispatch</div>
<svg width="13" height="14" viewBox="-0.5 0 13 14" style="position:absolute;left:524.5px;top:745.0px"><circle cx="6" cy="2.6" r="2.9" fill="#fff"/><path d="M3.6 5.9H8.4Q10 5.9 10.6 7.5L12 12.3Q12.1 12.6 11.6 12.6H10.2L9.2 9.3V13.7H2.8V9.3L1.8 12.6H0.4Q-0.1 12.6 0 12.3L1.4 7.5Q2 5.9 3.6 5.9Z" fill="#fff"/></svg>
<div class="a" style="left:543px;top:743px;font-size:13px;line-height:16px">ev_pending</div>
<svg width="13" height="14" viewBox="-0.5 0 13 14" style="position:absolute;left:524.5px;top:766.5px"><circle cx="6" cy="2.6" r="2.9" fill="#fff"/><path d="M3.6 5.9H8.4Q10 5.9 10.6 7.5L12 12.3Q12.1 12.6 11.6 12.6H10.2L9.2 9.3V13.7H2.8V9.3L1.8 12.6H0.4Q-0.1 12.6 0 12.3L1.4 7.5Q2 5.9 3.6 5.9Z" fill="#fff"/></svg>
<div class="a" style="left:543px;top:765px;font-size:13px;line-height:16px">ev_reassign</div>
<svg width="13" height="14" viewBox="-0.5 0 13 14" style="position:absolute;left:524.5px;top:788.5px"><circle cx="6" cy="2.6" r="2.9" fill="#fff"/><path d="M3.6 5.9H8.4Q10 5.9 10.6 7.5L12 12.3Q12.1 12.6 11.6 12.6H10.2L9.2 9.3V13.7H2.8V9.3L1.8 12.6H0.4Q-0.1 12.6 0 12.3L1.4 7.5Q2 5.9 3.6 5.9Z" fill="#fff"/></svg>
<div class="a" style="left:543px;top:787px;font-size:13px;line-height:16px">ev_reopen</div>
<svg width="13" height="14" viewBox="-0.5 0 13 14" style="position:absolute;left:524.5px;top:810.0px"><circle cx="6" cy="2.6" r="2.9" fill="#fff"/><path d="M3.6 5.9H8.4Q10 5.9 10.6 7.5L12 12.3Q12.1 12.6 11.6 12.6H10.2L9.2 9.3V13.7H2.8V9.3L1.8 12.6H0.4Q-0.1 12.6 0 12.3L1.4 7.5Q2 5.9 3.6 5.9Z" fill="#fff"/></svg>
<div class="a" style="left:543px;top:808px;font-size:13px;line-height:16px">ev_resolve</div>
<svg width="10" height="13" viewBox="0 0 10 13" style="position:absolute;left:526px;top:832.5px"><path d="M4.2 0.2H9L6.2 4.6H8.8L0.8 12.8L3.6 6.6H1.3Z" fill="#fff"/></svg>
<div class="a" style="left:543px;top:830px;font-size:13px;line-height:16px">ev_timeout</div>
<svg style="left:0;top:0" width="1" height="1" viewBox="0 0 1 1"><defs><radialGradient id="rg" cx="0.4" cy="0.3" r="0.8"><stop offset="0" stop-color="#ff6b6b"/><stop offset=".6" stop-color="#d81010"/><stop offset="1" stop-color="#a00"/></radialGradient><radialGradient id="gg" cx="0.4" cy="0.3" r="0.8"><stop offset="0" stop-color="#ccc"/><stop offset=".6" stop-color="#888"/><stop offset="1" stop-color="#555"/></radialGradient><radialGradient id="cg" cx="0.4" cy="0.3" r="0.8"><stop offset="0" stop-color="#fff"/><stop offset="1" stop-color="#bbb"/></radialGradient></defs></svg>
<svg style="left:830px;top:635px" width="32" height="85" viewBox="830 635 32 85"><circle cx="843.8" cy="648.3" r="7.6" fill="url(#rg)"/><rect x="842.2" y="643.5" width="2.6" height="6" rx=".8" fill="#fff"/><rect x="842.2" y="650.8" width="2.6" height="2.5" fill="#fff"/><path d="M850.5 641Q851.2 640.5 852 641Q854 642.5 854.3 646L855.5 648.5H846.6L847.8 646Q848 642.5 850.5 641Z" fill="#f0b400"/><circle cx="851" cy="649" r="1" fill="#c80"/><path d="M838 676Q834 676 834 672.5Q834 669.5 837 669Q838 665 842 665Q845.5 662.5 849 665.5Q853 665 853.5 669Q857.5 669.5 857.5 673Q857.5 676 854 676Z" fill="url(#cg)" stroke="#999" stroke-width=".5"/><circle cx="845.2" cy="677" r="7.7" fill="url(#rg)"/><rect x="843.7" y="672" width="2.6" height="6" rx=".8" fill="#fff"/><rect x="843.7" y="679.3" width="2.6" height="2.5" fill="#fff"/><path d="M850 676Q849 672 851.5 669.5Q852.5 668.5 852.8 666.5Q855 668.5 855 671Q856.5 670.5 856.5 669Q858 671.5 857 674Q856 677 853 677Q850.5 677 850 676Z" fill="#f7a800"/><path d="M851.5 675Q851 672.5 853 671Q853.5 673 855 673Q855 675.5 853 676Q852 676 851.5 675Z" fill="#ffd84a"/><circle cx="845.3" cy="706.3" r="7.6" fill="url(#gg)"/><rect x="843.9000000000001" y="701.5" width="2.6" height="6" rx=".8" fill="#fff"/><rect x="843.9000000000001" y="708.8" width="2.6" height="2.5" fill="#fff"/></svg>
<div class="a" style="left:868px;top:638.6px;font-size:12.4px;line-height:15px">warning</div>
<div class="a" style="left:933px;top:638.6px;font-size:12.4px;line-height:15px">Orange</div>
<div class="a" style="left:868px;top:667.6px;font-size:12.4px;line-height:15px">critical</div>
<div class="a" style="left:933px;top:667.6px;font-size:12.4px;line-height:15px">Red</div>
<div class="a" style="left:868px;top:696.7px;font-size:12.4px;line-height:15px">closed</div>
<div class="a" style="left:933px;top:696.7px;font-size:12.4px;line-height:15px">None</div>
<div class="a" style="left:0;top:846px;width:1564px;height:1px;background:#666"></div>
</body></html>
